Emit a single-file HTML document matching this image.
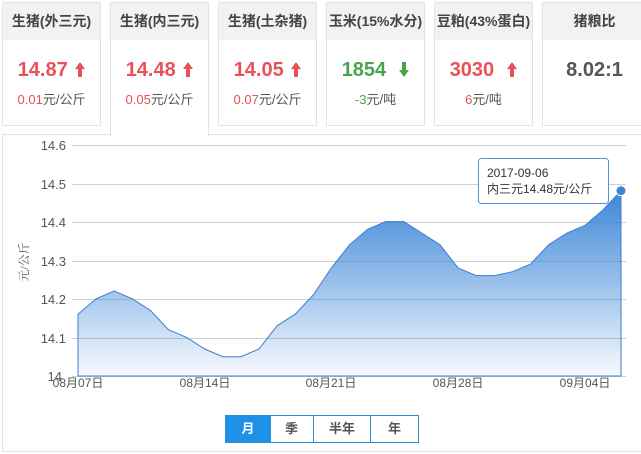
<!DOCTYPE html>
<html><head><meta charset="utf-8"><style>
body{margin:0;width:641px;height:454px;background:#fff;font-family:"Liberation Sans","Noto Sans CJK SC",sans-serif;position:relative;overflow:hidden}
.card{position:absolute;top:2px;height:124px;border:1px solid #e3e3e3;background:#fff;box-sizing:border-box;text-align:center}
.card .h{height:37px;background:#f2f2f2;line-height:37px;font-size:14px;color:#444;font-weight:bold}
.card .v{font-size:20px;font-weight:bold;margin-top:17px;line-height:26px}
.card .s{font-size:13px;color:#555;margin-top:6px}
.r{color:#e9505a}.g{color:#46a54a}
.act{height:134px;border-bottom:none;z-index:2}
.panel{position:absolute;left:2px;top:134px;width:650px;height:318px;border:1px solid #e0e0e0;box-sizing:border-box}
.btn{position:absolute;top:415px;height:28px;border:1px solid #2b8fd8;box-sizing:border-box;line-height:26px;text-align:center;font-size:13px;font-weight:bold;color:#555}
svg.a{vertical-align:-1px;margin-left:2px}
</style></head><body>
<div class="panel"></div>
<div class="card" style="left:2px;width:99px"><div class="h">生猪(外三元)</div><div class="v r">14.87 <svg class="a" width="10" height="16"><path d="M5 1L10 8H7V16H3V8H0Z" fill="#e9505a"/></svg></div><div class="s"><span class="r">0.01</span>元/公斤</div></div>
<div class="card act" style="left:110px;width:99px"><div class="h">生猪(内三元)</div><div class="v r">14.48 <svg class="a" width="10" height="16"><path d="M5 1L10 8H7V16H3V8H0Z" fill="#e9505a"/></svg></div><div class="s"><span class="r">0.05</span>元/公斤</div></div>
<div class="card" style="left:218px;width:99px"><div class="h">生猪(土杂猪)</div><div class="v r">14.05 <svg class="a" width="10" height="16"><path d="M5 1L10 8H7V16H3V8H0Z" fill="#e9505a"/></svg></div><div class="s"><span class="r">0.07</span>元/公斤</div></div>
<div class="card" style="left:326px;width:99px"><div class="h">玉米(15%水分)</div><div class="v g">1854 &nbsp;<svg class="a" width="10" height="16"><path d="M5 16L10 9H7V1H3V9H0Z" fill="#46a54a"/></svg></div><div class="s"><span class="g">-3</span>元/吨</div></div>
<div class="card" style="left:434px;width:99px"><div class="h">豆粕(43%蛋白)</div><div class="v r">3030 &nbsp;<svg class="a" width="10" height="16"><path d="M5 1L10 8H7V16H3V8H0Z" fill="#e9505a"/></svg></div><div class="s"><span class="r">6</span>元/吨</div></div>
<div class="card" style="left:542px;width:105px"><div class="h">猪粮比</div><div class="v" style="color:#555">8.02:1</div></div>
<svg style="position:absolute;left:0;top:0" width="641" height="454">
<defs><linearGradient id="gr" gradientUnits="userSpaceOnUse" x1="0" y1="190" x2="0" y2="376"><stop offset="0" stop-color="#3b86d8"/><stop offset="1" stop-color="#3b86d8" stop-opacity="0.04"/></linearGradient></defs>
<g stroke="#d0d0d0" stroke-width="1">
<line x1="72" y1="145.5" x2="626" y2="145.5"/><line x1="72" y1="184.5" x2="626" y2="184.5"/><line x1="72" y1="222.5" x2="626" y2="222.5"/><line x1="72" y1="261.5" x2="626" y2="261.5"/><line x1="72" y1="299.5" x2="626" y2="299.5"/><line x1="72" y1="338.5" x2="626" y2="338.5"/><line x1="72" y1="376.5" x2="626" y2="376.5"/>
</g>
<path fill="url(#gr)" stroke="#3f7ccc" stroke-width="1" d="M78,314.2 L96.1,298.8 114.2,291.1 132.3,298.8 150.4,310.4 168.5,329.7 186.6,337.4 204.7,349 222.8,356.7 240.9,356.7 259,349 277.1,325.8 295.2,314.2 313.3,294.9 331.4,267.9 349.5,244.8 367.6,229.3 385.7,221.6 403.8,221.6 421.9,233.2 440,244.8 458.1,267.9 476.2,275.6 494.3,275.6 512.4,271.8 530.5,264.1 548.6,244.8 566.7,233.2 584.8,225.5 602.9,210 621,190.7 L621,376 78,376Z"/>
<circle cx="621" cy="190.7" r="5" fill="#3b86d8" stroke="#fff" stroke-width="1"/>
<g font-size="13" fill="#555" text-anchor="end">
<text x="66" y="150">14.6</text><text x="66" y="189">14.5</text><text x="66" y="227">14.4</text><text x="66" y="266">14.3</text><text x="66" y="304">14.2</text><text x="66" y="343">14.1</text><text x="62" y="381">14</text></g>
<g font-size="12" fill="#555" text-anchor="middle">
<text x="78" y="387">08月07日</text><text x="205" y="387">08月14日</text><text x="331" y="387">08月21日</text><text x="458" y="387">08月28日</text><text x="585" y="387">09月04日</text></g>
<text transform="translate(28,262) rotate(-90)" font-size="12" fill="#556" text-anchor="middle" font-family="Liberation Serif,Noto Serif CJK SC,serif">元/公斤</text>
<rect x="478.5" y="158.5" width="130" height="45" rx="3" fill="#fff" stroke="#5a8fd6"/>
<text x="487" y="177" font-size="12" fill="#333">2017-09-06</text>
<text x="487" y="193" font-size="12" fill="#333">内三元14.48元/公斤</text>
</svg>
<div class="btn" style="left:225px;width:46px;background:#1e90e8;color:#fff">月</div>
<div class="btn" style="left:270px;width:44px;border-left:none">季</div>
<div class="btn" style="left:313px;width:58px">半年</div>
<div class="btn" style="left:370px;width:49px">年</div>
</body></html>
